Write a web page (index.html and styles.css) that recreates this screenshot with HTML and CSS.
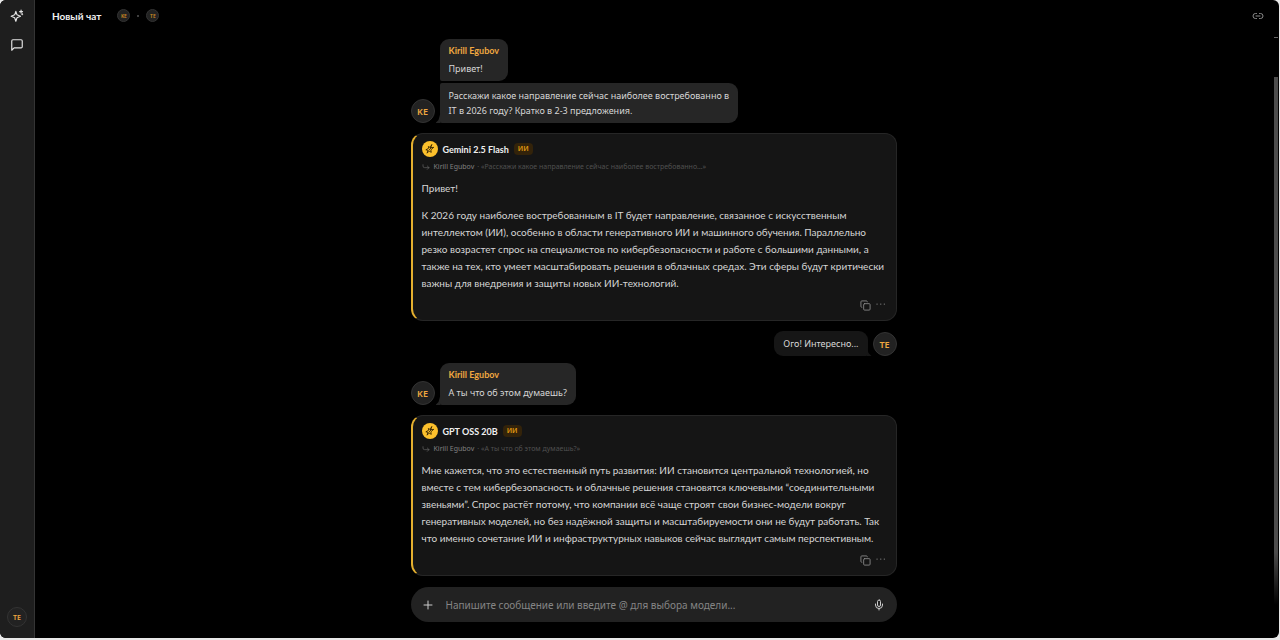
FILE: index.html
```html
<!DOCTYPE html>
<html lang="ru">
<head>
    <meta charset="UTF-8">
    <meta name="viewport" content="width=device-width, initial-scale=1.0">
    <title>Новый чат</title>
    <link rel="stylesheet" href="styles.css">
</head>
<body>
    <!-- Иконки -->
    <svg class="sprite" aria-hidden="true">
        <symbol id="sparkles" viewBox="0 0 24 24">
            <path d="M10 4l2 6 6 2.500-6 2.500-2 6-2-6-6-2.500L8 10z"/>
            <path d="M19 2v5M16.500 4.500h5"/>
            <circle cx="21" cy="9" r=".6"/>
        </symbol>
        <symbol id="bolt" viewBox="0 0 24 24">
            <path d="M16 2l-3 7 8-1-7 6 1 6-5-3-5 5 2-7-5-1 7-4-1-4 4 2zM9 15l6-6"/>
        </symbol>
        <symbol id="chat" viewBox="0 0 24 24">
            <path d="M3 21V5a2 2 0 0 1 2-2h14a2 2 0 0 1 2 2v10a2 2 0 0 1-2 2H7z"/>
        </symbol>
        <symbol id="link" viewBox="0 0 24 24">
            <path d="M9 17H7A5 5 0 0 1 7 7h2M15 7h2a5 5 0 0 1 0 10h-2M8 12h8"/>
        </symbol>
        <symbol id="reply" viewBox="0 0 24 24">
            <path d="M3 5v4a5 5 0 0 0 5 5h13M16 9l5 5-5 5"/>
        </symbol>
        <symbol id="copy" viewBox="0 0 24 24">
            <rect x="8" y="8" width="14" height="14" rx="2"/>
            <path d="M4 16a2 2 0 0 1-2-2V4a2 2 0 0 1 2-2h10a2 2 0 0 1 2 2"/>
        </symbol>
        <symbol id="dots" viewBox="0 0 24 24">
            <path d="M4 9h1M12 9h1M20 9h1"/>
        </symbol>
        <symbol id="plus" viewBox="0 0 24 24">
            <path d="M12 4v16M4 12h16"/>
        </symbol>
        <symbol id="mic" viewBox="0 0 24 24">
            <rect x="9" y="2" width="6" height="13" rx="3"/>
            <path d="M5 10v2a7 7 0 0 0 14 0v-2M12 19v3"/>
        </symbol>
    </svg>

    <div class="app">
        <nav class="sidebar">
            <button type="button" aria-label="Новый чат"><svg class="icon"><use href="#sparkles"/></svg></button>
            <button type="button" aria-label="Чаты"><svg class="icon"><use href="#chat"/></svg></button>
            <button type="button" class="avatar avatar-user" aria-label="Профиль">TE</button>
        </nav>

        <main class="main">
            <header class="header">
                <h1>Новый чат</h1>
                <div class="members">
                    <span class="avatar avatar-small">KE</span>
                    <span class="dot"></span>
                    <span class="avatar avatar-small">TE</span>
                </div>
                <button type="button" class="share" aria-label="Ссылка"><svg class="icon"><use href="#link"/></svg></button>
            </header>

            <div class="content">
                <div class="column">
                    <div class="messages">
                        <div class="row">
                            <span class="avatar">KE</span>
                            <div class="bubbles">
                                <div class="bubble">
                                    <div class="name">Kirill Egubov</div>
                                    Привет!
                                </div>
                                <div class="bubble tail">Расскажи какое направление сейчас наиболее востребованно в<br>IT в 2026 году? Кратко в 2-3 предложения.</div>
                            </div>
                        </div>

                        <article class="card">
                            <div class="card-head">
                                <span class="bot"><svg class="icon"><use href="#bolt"/></svg></span>
                                <h2>Gemini 2.5 Flash</h2>
                                <span class="badge">ИИ</span>
                            </div>
                            <div class="quote">
                                <svg class="icon"><use href="#reply"/></svg>
                                <b>Kirill Egubov</b> · «Расскажи какое направление сейчас наиболее востребованно…»
                            </div>
                            <p>Привет!</p>
                            <p>К 2026 году наиболее востребованным в IT будет направление, связанное с искусственным<br>
                            интеллектом (ИИ), особенно в области генеративного ИИ и машинного обучения. Параллельно<br>
                            резко возрастет спрос на специалистов по кибербезопасности и работе с большими данными, а<br>
                            также на тех, кто умеет масштабировать решения в облачных средах. Эти сферы будут критически<br>
                            важны для внедрения и защиты новых ИИ-технологий.</p>
                            <div class="actions">
                                <button type="button" aria-label="Копировать"><svg class="icon"><use href="#copy"/></svg></button>
                                <button type="button" aria-label="Ещё"><svg class="icon"><use href="#dots"/></svg></button>
                            </div>
                        </article>

                        <div class="row row-own">
                            <div class="bubble tail">Ого! Интересно...</div>
                            <span class="avatar">TE</span>
                        </div>

                        <div class="row">
                            <span class="avatar">KE</span>
                            <div class="bubbles">
                                <div class="bubble tail">
                                    <div class="name">Kirill Egubov</div>
                                    А ты что об этом думаешь?
                                </div>
                            </div>
                        </div>

                        <article class="card">
                            <div class="card-head">
                                <span class="bot"><svg class="icon"><use href="#bolt"/></svg></span>
                                <h2>GPT OSS 20B</h2>
                                <span class="badge">ИИ</span>
                            </div>
                            <div class="quote">
                                <svg class="icon"><use href="#reply"/></svg>
                                <b>Kirill Egubov</b> · «А ты что об этом думаешь?»
                            </div>
                            <p>Мне кажется, что это естественный путь развития: ИИ становится центральной технологией, но<br>
                            вместе с тем кибербезопасность и облачные решения становятся ключевыми “соединительными<br>
                            звеньями”. Спрос растёт потому, что компании всё чаще строят свои бизнес-модели вокруг<br>
                            генеративных моделей, но без надёжной защиты и масштабируемости они не будут работать. Так<br>
                            что именно сочетание ИИ и инфраструктурных навыков сейчас выглядит самым перспективным.</p>
                            <div class="actions">
                                <button type="button" aria-label="Копировать"><svg class="icon"><use href="#copy"/></svg></button>
                                <button type="button" aria-label="Ещё"><svg class="icon"><use href="#dots"/></svg></button>
                            </div>
                        </article>
                    </div>

                    <form class="composer">
                        <button type="button" aria-label="Добавить"><svg class="icon"><use href="#plus"/></svg></button>
                        <input type="text" aria-label="Сообщение" placeholder="Напишите сообщение или введите @ для выбора модели...">
                        <button type="button" aria-label="Голосовой ввод"><svg class="icon"><use href="#mic"/></svg></button>
                    </form>
                </div>

                <div class="scrollbar">
                    <span class="scroll-up"></span>
                    <span class="scroll-thumb"></span>
                </div>
            </div>
        </main>
    </div>
</body>
</html>
```
FILE: styles.css
```css
* {
    box-sizing: border-box;
}

body {
    margin: 0;
    padding: 0 1px 2px 0;
    background: #e8e8e8;
    font-family: "Noto Sans", "Open Sans", sans-serif;
    font-size: 9px;
    color: #d6d6d6;
}

h1, h2, p {
    margin: 0;
}

button {
    display: flex;
    align-items: center;
    justify-content: center;
    padding: 0;
    border: none;
    background: none;
    color: inherit;
    font-family: inherit;
    cursor: pointer;
}

.sprite {
    display: none;
}

.icon {
    display: block;
    flex: none;
    width: 12px;
    height: 12px;
    fill: none;
    stroke: currentColor;
    stroke-width: 2;
    stroke-linecap: round;
    stroke-linejoin: round;
}

.app {
    display: flex;
    min-height: calc(100vh - 2px);
    background: #000;
    border-radius: 6px;
    overflow: hidden;
}

/* Боковая панель */
.sidebar {
    display: flex;
    flex-direction: column;
    align-items: center;
    gap: 15px;
    flex: none;
    width: 35px;
    padding: 9px 0 11px;
    background: #1e1e1e;
    border-right: 1px solid #343434;
    color: #e4e4e4;
}

.sidebar .icon {
    width: 14px;
    height: 14px;
}

.avatar {
    display: flex;
    align-items: center;
    justify-content: center;
    flex: none;
    width: 24px;
    height: 24px;
    border: 1px solid #333;
    border-radius: 50%;
    background: #222;
    color: #f0a840;
    font-size: 9px;
    font-weight: 600;
}

.sidebar .avatar-user {
    width: 20px;
    height: 20px;
    margin-top: auto;
    font-size: 7px;
}

.avatar-small {
    width: 13px;
    height: 13px;
    font-size: 5px;
    color: #d08a24;
}

.main {
    display: flex;
    flex-direction: column;
    flex: 1;
    min-width: 0;
}

/* Шапка */
.header {
    display: flex;
    align-items: center;
    height: 31px;
    padding: 0 15px 0 17px;
}

.header h1 {
    font-family: Lato, sans-serif;
    font-size: 10px;
    font-weight: 700;
    color: #f0f0f0;
}

.members {
    display: flex;
    align-items: center;
    gap: 7px;
    margin-left: 16px;
}

.dot {
    width: 2px;
    height: 2px;
    border-radius: 50%;
    background: #555;
}

.share {
    margin-left: auto;
    color: #8a8a8a;
}

.content {
    display: flex;
    flex: 1;
}

.column {
    display: flex;
    flex-direction: column;
    flex: 1;
    max-width: 486px;
    margin: 0 auto;
    padding: 8px 0 16px;
}

.messages {
    display: flex;
    flex-direction: column;
    flex: 1;
    gap: 10px;
}

/* Сообщения */
.row {
    display: flex;
    align-items: flex-end;
    gap: 5px;
}

.row-own {
    justify-content: flex-end;
}

.card + .row-own + .row {
    margin-top: -3px;
}

.bubbles {
    display: flex;
    flex-direction: column;
    align-items: flex-start;
    gap: 2px;
}

.bubble {
    position: relative;
    padding: 5px 9px;
    border-radius: 9px;
    background: #262626;
    line-height: 15px;
    white-space: nowrap;
}

.bubbles .bubble {
    border-bottom-left-radius: 2px;
}

.bubbles .bubble + .bubble {
    border-top-left-radius: 2px;
}

.bubbles .tail::before {
    content: "";
    position: absolute;
    left: -4px;
    bottom: 0;
    width: 5px;
    height: 10px;
    background: inherit;
    clip-path: polygon(100% 0, 100% 100%, 0 100%, 60% 70%);
}

.row-own .bubble {
    background: #161616;
    border-bottom-right-radius: 2px;
}

.row-own .tail::after {
    content: "";
    position: absolute;
    right: -4px;
    bottom: 0;
    width: 5px;
    height: 10px;
    background: inherit;
    clip-path: polygon(0 0, 0 100%, 100% 100%, 40% 70%);
}

.name {
    margin-bottom: 4px;
    color: #f0a840;
    font-family: Lato, sans-serif;
    font-weight: 700;
    line-height: 13px;
}

/* Ответы моделей */
.card {
    padding: 7px 10px 7px 9px;
    border: 1px solid #262626;
    border-left: 2px solid #e5b02f;
    border-radius: 12px;
    background: #151515;
    line-height: 17px;
}

.card-head {
    display: flex;
    align-items: center;
    gap: 5px;
    height: 16px;
}

.card-head h2 {
    font-family: Lato, sans-serif;
    font-size: 9px;
    font-weight: 700;
    color: #f0f0f0;
}

.bot {
    display: flex;
    align-items: center;
    justify-content: center;
    width: 16px;
    height: 16px;
    border-radius: 50%;
    background: #fcc02c;
    color: #2a1c00;
}

.bot .icon {
    width: 10px;
    height: 10px;
}

.badge {
    padding: 0 4px;
    border-radius: 4px;
    background: #33230a;
    color: #e09a10;
    font-size: 7px;
    font-weight: 600;
    line-height: 12px;
}

.quote {
    display: flex;
    align-items: center;
    gap: 3px;
    margin: 5px 0 8px;
    font-size: 7px;
    line-height: 10px;
    color: #505050;
}

.quote b {
    margin-left: 1px;
    font-weight: 400;
    color: #808080;
}

.quote .icon {
    width: 8px;
    height: 8px;
    color: #666;
}

.card p + p {
    margin-top: 10px;
}

.card p {
    font-family: Lato, sans-serif;
    font-size: 10px;
    white-space: nowrap;
}

.actions {
    display: flex;
    justify-content: flex-end;
    gap: 4px;
    height: 16px;
    margin-top: 5px;
    color: #858585;
}

.actions .icon {
    width: 11px;
    height: 11px;
}

/* Поле ввода */
.composer {
    display: flex;
    align-items: center;
    gap: 12px;
    height: 35px;
    padding: 0 12px 0 11px;
    border-radius: 18px;
    background: #222;
    color: #ccc;
}

.composer input {
    flex: 1;
    min-width: 0;
    padding: 0;
    border: none;
    outline: none;
    background: none;
    color: #ddd;
    font-family: inherit;
    font-size: 10px;
}

.composer input::placeholder {
    color: #858585;
    opacity: 1;
}

/* Полоса прокрутки */
.scrollbar {
    display: flex;
    flex-direction: column;
    align-items: center;
    width: 7px;
    padding: 6px 0 33px;
}

.scroll-up {
    width: 4px;
    height: 1px;
    background: #666;
}

.scroll-thumb {
    flex: 1;
    width: 4px;
    margin-top: 39px;
    background: linear-gradient(#4c4c4c 90%, #000);
}
```
